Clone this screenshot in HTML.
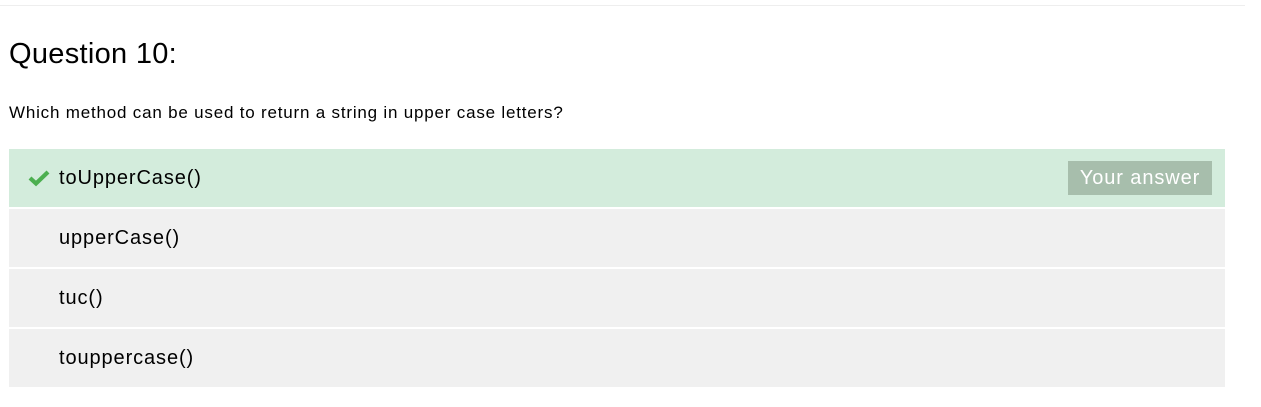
<!DOCTYPE html>
<html><head><style>
body{margin:0;width:1261px;height:407px;background:#fff;font-family:"Liberation Sans",sans-serif;color:#000;position:relative;overflow:hidden}
.top{position:absolute;left:0;top:5px;width:1245px;height:1px;background:#eee}
h2{position:absolute;left:9px;top:37px;margin:0;font-weight:normal;font-size:29px;line-height:34px;letter-spacing:0.3px}
.q{position:absolute;left:9px;top:102px;font-size:17px;line-height:22px;letter-spacing:0.8px}
.row{position:absolute;left:9px;width:1216px;height:58px;background:#f0f0f0;font-size:20px;line-height:58px;letter-spacing:0.9px}
.row span{position:absolute;left:50px}
.g{background:#d3ecdc}
.badge{position:absolute;left:1059px;top:12px;width:144px;height:34px;background:#a7beac;color:#fff;font-size:20px;line-height:34px;text-align:center;letter-spacing:0.9px}
svg{position:absolute;left:19px;top:20px}
</style></head><body>
<div class="top"></div>
<h2>Question 10:</h2>
<div class="q">Which method can be used to return a string in upper case letters?</div>
<div class="row g" style="top:149px"><svg width="22" height="18" viewBox="0 0 22 18"><path d="M2 9 L8 14.5 L20 3" stroke="#4caf50" stroke-width="4.2" fill="none"/></svg><span>toUpperCase()</span><div class="badge">Your answer</div></div>
<div class="row" style="top:209px"><span>upperCase()</span></div>
<div class="row" style="top:269px"><span>tuc()</span></div>
<div class="row" style="top:329px"><span>touppercase()</span></div>
</body></html>
